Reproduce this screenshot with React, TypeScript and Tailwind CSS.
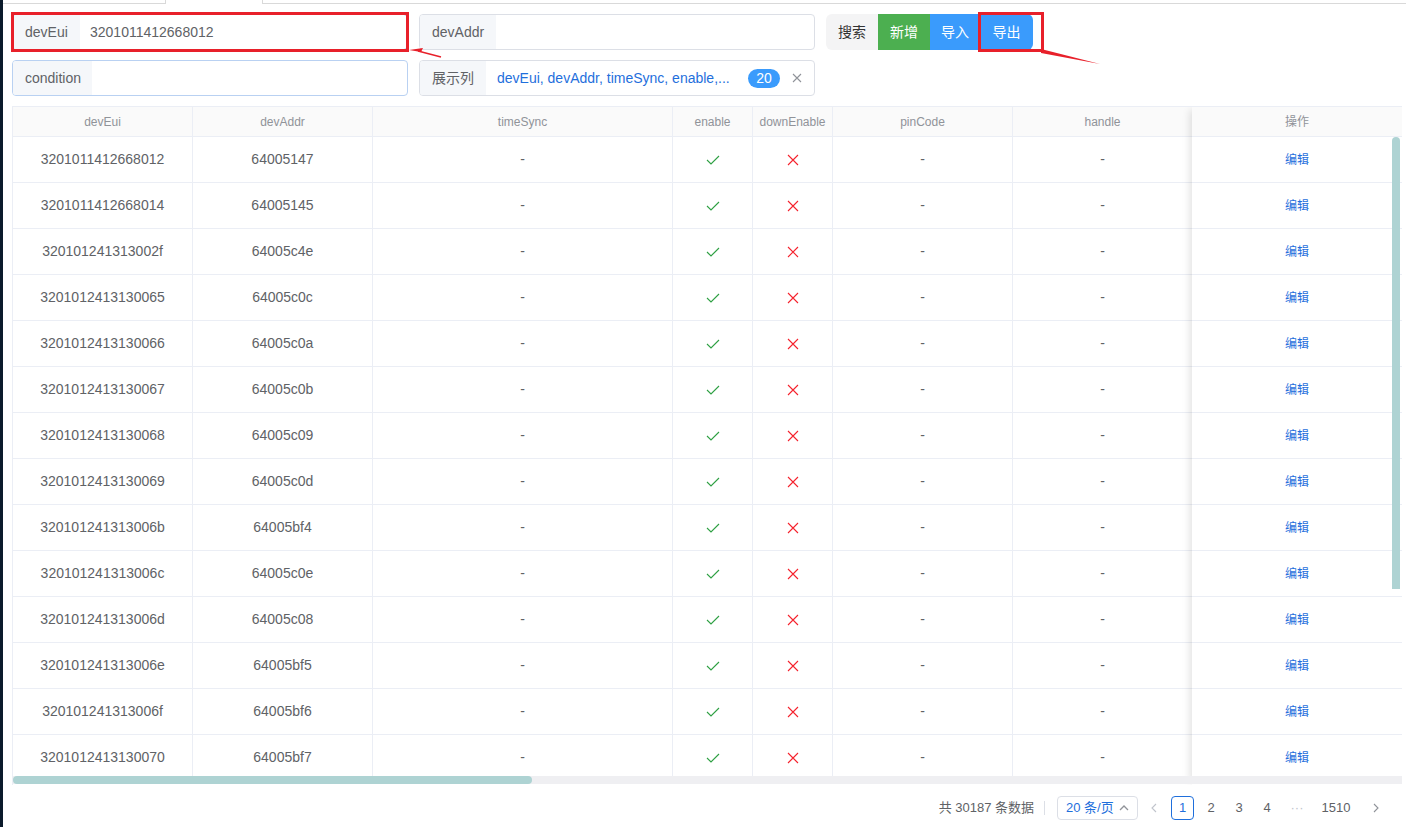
import React from 'react';

const FONT = { fontFamily: '"Liberation Sans", Arial, "Noto Sans CJK SC", sans-serif' };

// devEui / devAddr pairs for the visible page
const ROWS: [string, string][] = [
  ['3201011412668012', '64005147'],
  ['3201011412668014', '64005145'],
  ['320101241313002f', '64005c4e'],
  ['3201012413130065', '64005c0c'],
  ['3201012413130066', '64005c0a'],
  ['3201012413130067', '64005c0b'],
  ['3201012413130068', '64005c09'],
  ['3201012413130069', '64005c0d'],
  ['320101241313006b', '64005bf4'],
  ['320101241313006c', '64005c0e'],
  ['320101241313006d', '64005c08'],
  ['320101241313006e', '64005bf5'],
  ['320101241313006f', '64005bf6'],
  ['3201012413130070', '64005bf7'],
];

const COLS: { key: string; label: string; w: string }[] = [
  { key: 'devEui', label: 'devEui', w: 'w-[180px]' },
  { key: 'devAddr', label: 'devAddr', w: 'w-[180px]' },
  { key: 'timeSync', label: 'timeSync', w: 'w-[300px]' },
  { key: 'enable', label: 'enable', w: 'w-[80px]' },
  { key: 'downEnable', label: 'downEnable', w: 'w-[80px]' },
  { key: 'pinCode', label: 'pinCode', w: 'w-[180px]' },
  { key: 'handle', label: 'handle', w: 'w-[180px]' },
];

function Check() {
  return (
    <svg width="14" height="10" viewBox="0 0 14 10" fill="none">
      <path d="M1 5l4 4 8-8" stroke="#2ea043" strokeWidth="1.1" />
    </svg>
  );
}

function Cross() {
  return (
    <svg width="12" height="12" viewBox="0 0 12 12" fill="none">
      <path d="M1 1l10 10M11 1L1 11" stroke="#f5222d" strokeWidth="1.1" />
    </svg>
  );
}

function LabeledInput({ label, labelW, value, border = 'border-[#dcdfe6]' }: { label: string; labelW: string; value?: string; border?: string }) {
  return (
    <div className={`flex h-[36px] w-[396px] overflow-hidden rounded-[4px] border bg-white ${border}`}>
      <div className={`flex ${labelW} flex-none items-center bg-[#f5f7fa] pl-[12px] text-[14px] text-[#606266]`}>{label}</div>
      <div className="flex flex-1 items-center pl-[10px] text-[14px] text-[#606266]">{value}</div>
    </div>
  );
}

function cellContent(key: string, row: [string, string]) {
  if (key === 'devEui') return row[0];
  if (key === 'devAddr') return row[1];
  if (key === 'enable') return <Check />;
  if (key === 'downEnable') return <Cross />;
  return '-';
}

export default function App() {
  return (
    <div className="relative flex h-[827px] w-[1406px] overflow-hidden bg-white" style={FONT}>
      <div className="w-[3px] flex-none bg-[#0b1a2b]" />
      <div className="flex min-w-0 flex-1 flex-col">
        {/* tab strip remnant */}
        <div className="flex h-[4px] flex-none">
          <div className="w-[163px] border-b border-r border-[#d9d9d9]" />
          <div className="w-[97px] border-r border-[#d9d9d9]" />
          <div className="flex-1 border-b border-[#d9d9d9]" />
        </div>

        {/* filter toolbar */}
        <div className="flex flex-col gap-[10px] pl-[9px] pt-[10px]">
          <div className="flex gap-[11px]">
            <div className="relative">
              <LabeledInput label="devEui" labelW="w-[67px]" value="3201011412668012" border="border-[#8ab8f5]" />
              <div className="pointer-events-none absolute -inset-x-[1px] -top-[2px] -bottom-[2px] border-[3px] border-[#e8202a]" />
            </div>
            <LabeledInput label="devAddr" labelW="w-[76px]" />
            <div className="relative flex h-[36px] text-[14px]">
              <div className="flex w-[52px] items-center justify-center rounded-l-[6px] bg-[#f4f4f5] text-[#333]">搜索</div>
              <div className="flex w-[52px] items-center justify-center bg-[#4caf50] text-white">新增</div>
              <div className="flex w-[50px] items-center justify-center bg-[#3a9bfc] text-white">导入</div>
              <div className="flex w-[53px] items-center justify-center rounded-r-[6px] bg-[#3a9bfc] text-white">导出</div>
              <div className="pointer-events-none absolute -top-[2px] left-[152px] h-[40px] w-[66px] border-[3px] border-[#e8202a]" />
            </div>
          </div>
          <div className="flex gap-[11px]">
            <LabeledInput label="condition" labelW="w-[79px]" border="border-[#b9d1f2]" />
            <div className="flex h-[36px] w-[396px] items-center overflow-hidden rounded-[4px] border border-[#dcdfe6] bg-white">
              <div className="flex h-full w-[66px] flex-none items-center bg-[#f5f7fa] pl-[12px] text-[14px] text-[#606266]">展示列</div>
              <div className="flex flex-1 items-center pl-[11px] text-[14px] text-[#1f6fdc]">devEui, devAddr, timeSync, enable,...</div>
              <div className="mr-[12px] flex h-[19px] w-[32px] items-center justify-center rounded-full bg-[#3a9bfc] text-[14px] text-white">20</div>
              <div className="mr-[12px] flex items-center text-[#909399]">
                <svg width="10" height="10" viewBox="0 0 10 10" fill="none">
                  <path d="M1 1l8 8M9 1L1 9" stroke="#909399" strokeWidth="1.1" />
                </svg>
              </div>
            </div>
          </div>
        </div>

        {/* table */}
        <div className="relative ml-[9px] mt-[10px] flex h-[679px] w-[1390px] flex-none overflow-hidden border-l border-t border-[#ebeef5]">
          <div className="flex w-[1179px] flex-none flex-col">
            <div className="flex h-[30px] flex-none border-b border-[#ebeef5] bg-[#fafafa] text-[12px] text-[#909399]">
              {COLS.map((c) => (
                <div key={c.key} className={`${c.w} flex flex-none items-center justify-center border-r border-[#ebeef5]`}>
                  {c.label}
                </div>
              ))}
            </div>
            {ROWS.map((r) => (
              <div key={r[0]} className="flex h-[46px] flex-none border-b border-[#ebeef5] text-[14px] text-[#606266]">
                {COLS.map((c) => (
                  <div key={c.key} className={`${c.w} flex flex-none items-center justify-center border-r border-[#ebeef5]`}>
                    {cellContent(c.key, r)}
                  </div>
                ))}
              </div>
            ))}
          </div>
          <div className="z-10 flex w-[210px] flex-none flex-col bg-white shadow-[-5px_0_8px_-3px_rgba(0,0,0,0.12)]">
            <div className="flex h-[30px] flex-none items-center justify-center border-b border-[#ebeef5] bg-[#fafafa] text-[12px] text-[#909399]">操作</div>
            {ROWS.map((r) => (
              <div key={r[0]} className="flex h-[46px] flex-none items-center justify-center border-b border-[#ebeef5] text-[12px] text-[#1f6fdc]">
                编辑
              </div>
            ))}
          </div>
          {/* vertical scrollbar overlay */}
          <div className="absolute right-[2px] top-[30px] z-20 h-[452px] w-[8px] rounded-t-full bg-[#aed3d3]" />
          {/* horizontal scrollbar overlay */}
          <div className="absolute bottom-[1px] left-0 right-0 z-20 h-[8px] bg-[#efeff2]">
            <div className="h-[8px] w-[519px] rounded-full bg-[#aed3d3]" />
          </div>
        </div>

        {/* pagination */}
        <div className="mt-[11px] flex h-[24px] items-center justify-end pr-[23px] text-[13px] text-[#606266]">
          <span>共 30187 条数据</span>
          <span className="ml-[10px] h-[14px] w-px bg-[#dcdfe6]" />
          <div className="ml-[12px] flex h-[24px] w-[81px] items-center justify-between rounded-[4px] border border-[#dcdfe6] pl-[8px] pr-[8px] text-[#1f6fdc]">
            <span>20 条/页</span>
            <svg width="10" height="6" viewBox="0 0 10 6" fill="none">
              <path d="M1 5l4-4 4 4" stroke="#909399" strokeWidth="1.3" />
            </svg>
          </div>
          <span className="ml-[9px] flex w-[14px] justify-center">
            <svg width="6" height="10" viewBox="0 0 6 10" fill="none">
              <path d="M5 1L1 5l4 4" stroke="#c0c4cc" strokeWidth="1.1" />
            </svg>
          </span>
          <span className="ml-[10px] flex h-[24px] w-[23px] items-center justify-center rounded-[4px] border border-[#1f6fdc] text-[#1f6fdc]">1</span>
          <span className="flex w-[34px] justify-center">2</span>
          <span className="flex w-[22px] justify-center">3</span>
          <span className="flex w-[34px] justify-center">4</span>
          <span className="flex w-[26px] justify-center text-[#c0c4cc]">···</span>
          <span className="flex w-[52px] justify-center">1510</span>
          <span className="ml-[7px] flex w-[14px] justify-center">
            <svg width="6" height="10" viewBox="0 0 6 10" fill="none">
              <path d="M1 1l4 4-4 4" stroke="#909399" strokeWidth="1.1" />
            </svg>
          </span>
        </div>
      </div>

      {/* red annotation arrows */}
      <svg className="pointer-events-none absolute left-0 top-0" width="1406" height="827" viewBox="0 0 1406 827">
        <polygon points="409,50 423,48 421,52" fill="#e8202a" />
        <line x1="418" y1="51" x2="441" y2="57" stroke="#e8202a" strokeWidth="1.5" />
        <polygon points="1041,49 1041,53 1100,64" fill="#e8202a" />
      </svg>
    </div>
  );
}
